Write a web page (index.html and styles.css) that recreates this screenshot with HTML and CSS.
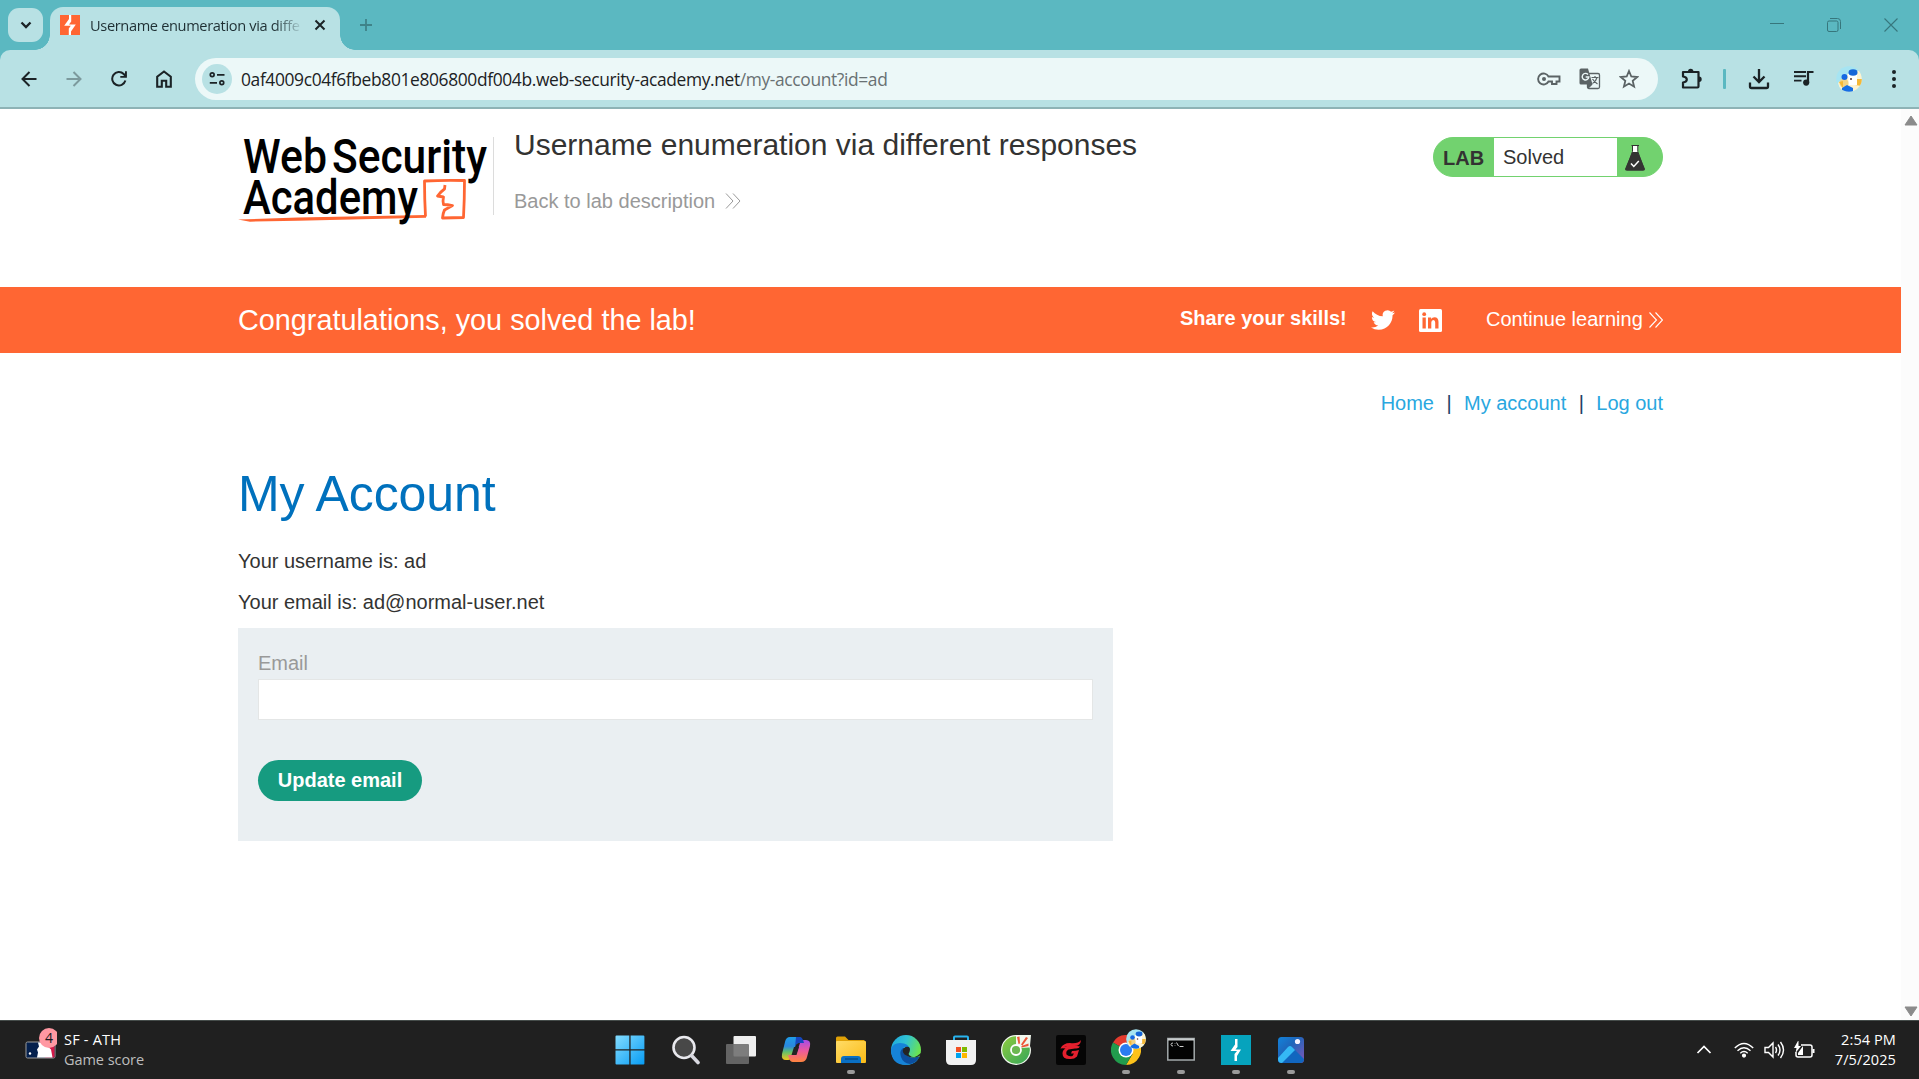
FILE: index.html
```html
<!DOCTYPE html>
<html lang="en">
<head>
<meta charset="utf-8">
<title>Username enumeration via different responses</title>
<link rel="stylesheet" href="styles.css">
</head>
<body>
<div class="tabstrip">
  <div class="tab-search"><svg width="12" height="8" viewBox="0 0 12 8"><path d="M1.500 1.500 6 6l4.500-4.500" fill="none" stroke="#1b2326" stroke-width="2.300"/></svg></div>
  <div class="tab">
    <svg class="favicon" width="20" height="20" viewBox="0 0 20 20"><path d="M0 0h20v20H0z" fill="#ff6633"/><path d="M9 0h2.200v6.500L9 9.500h6.800L11 16.500V20H8.800v-6.500l2-2.800H4.200L9 4z" fill="#fff"/></svg>
    <span class="tab-title">Username enumeration via diffe</span>
    <svg width="12" height="12" viewBox="0 0 12 12"><path d="m1.500 1.500 9 9m0-9-9 9" stroke="#1b2326" stroke-width="2"/></svg>
  </div>
  <svg class="newtab" width="14" height="14" viewBox="0 0 14 14"><path d="M7 1v12M1 7h12" stroke="#3f8389" stroke-width="1.800"/></svg>
  <div class="winctl">
    <svg width="14" height="14" viewBox="0 0 14 14"><path d="M0 5.500h14" stroke="#37767c"/></svg>
    <svg width="14" height="14" viewBox="0 0 14 14" fill="none" stroke="#37767c"><rect x=".5" y="3" width="10.500" height="10.500" rx="1.500"/><path d="M3 .5h7.500a3 3 0 0 1 3 3V11"/></svg>
    <svg width="14" height="14" viewBox="0 0 14 14"><path d="m.5.5 13 13m0-13-13 13" stroke="#37767c" stroke-width="1.100"/></svg>
  </div>
</div>

<div class="toolbar">
  <div class="cell"><svg width="16" height="16" viewBox="0 0 16 16"><path d="M15.500 8H2m6.500-7L1.500 8l7 7" fill="none" stroke="#1b2326" stroke-width="2"/></svg></div>
  <div class="cell"><svg width="16" height="16" viewBox="0 0 16 16"><path d="M.5 8H14M7.500 1l7 7-7 7" fill="none" stroke="#7c9a9d" stroke-width="2"/></svg></div>
  <div class="cell"><svg width="16" height="16" viewBox="0 0 16 16"><path d="M14.400 9.500A6.700 6.700 0 1 1 12.700 3L15 5.500" fill="none" stroke="#1b2326" stroke-width="2"/><path d="M15.900.2v6.600H9.300V5h4.700V.2z" fill="#1b2326"/></svg></div>
  <div class="cell"><svg width="16" height="18" viewBox="0 0 16 18"><path d="M1.200 16.800V6.700L8 1.500l6.800 5.200v10.100h-4.600v-6H5.800v6z" fill="none" stroke="#1b2326" stroke-width="2.100"/></svg></div>
  <div class="omnibox">
    <div class="siteinfo"><svg width="16" height="14" viewBox="0 0 16 14" fill="none" stroke="#1b2326" stroke-width="1.700"><circle cx="3.200" cy="2.800" r="1.900"/><path d="M8 2.800h7.500M.8 10.800h7.200"/><circle cx="12.800" cy="10.800" r="1.900"/></svg></div>
    <div class="url">0af4009c04f6fbeb801e806800df004b.web-security-academy.net<span>/my-account?id=ad</span></div>
    <div class="pageicons">
      <svg width="24" height="14" viewBox="0 0 24 14"><path d="M11.500 4.500a5.500 5.500 0 1 0 0 5H15v2.500h4.500V9.500H22.500v-5z" fill="none" stroke="#5b6365" stroke-width="1.900"/><circle cx="7" cy="7" r="2" fill="#5b6365"/></svg>
      <svg width="22" height="22" viewBox="0 0 22 22"><rect x="8.500" y="5.500" width="12" height="15" rx="1.500" fill="#ecf8f8" stroke="#5b6365" stroke-width="1.300"/><path d="M2 .5h7l4.500 16H2A1.500 1.500 0 0 1 .5 15V2A1.500 1.500 0 0 1 2 .5zM9 21l4.500-4.500H8z" fill="#5b6365"/><path d="M9 6.500a3.300 3.300 0 1 0 .8 2.500H6.700" fill="none" stroke="#ecf8f8" stroke-width="1.400"/><path d="M12.500 9.500h7M16 8v1.500m2 0q-1 4-4.500 6m0-4.500q2 3 5 5" fill="none" stroke="#5b6365" stroke-width="1.200"/></svg>
      <svg width="20" height="20" viewBox="0 0 20 20"><path d="m10 2 2.300 5.500 5.900.5-4.500 3.900 1.400 5.800-5.100-3.100-5.100 3.100 1.400-5.800L1.800 8l5.900-.5z" fill="none" stroke="#5b6365" stroke-width="1.800"/></svg>
    </div>
  </div>
  <div class="cell ext"><svg width="21" height="21" viewBox="0 0 21 21"><path d="M2 4h15.500v14.500q0 1-1 1H2v-5q3.800-.5 3.800-3T2 8.500z" fill="none" stroke="#1b2326" stroke-width="2.200" stroke-linejoin="round"/><path d="M7 3.500a2.700 2.700 0 0 1 5.400 0zM18 8.500a2.700 2.700 0 0 1 0 5.400z" fill="#1b2326"/></svg></div>
  <div class="sep"></div>
  <div class="cell"><svg width="22" height="22" viewBox="0 0 22 22"><path d="M11 1v12M5.500 8.500 11 14l5.500-5.500M2 14.500v4q0 1.500 1.500 1.500h15q1.500 0 1.500-1.500v-4" fill="none" stroke="#1b2326" stroke-width="2.300"/></svg></div>
  <div class="cell media"><svg width="20" height="16" viewBox="0 0 20 16"><path d="M0 2h12M0 6.300h12M0 10.600h7.500" stroke="#1b2326" stroke-width="1.900"/><path d="M14 12.500V2h5.500" fill="none" stroke="#1b2326" stroke-width="2.200"/><circle cx="12.200" cy="12.600" r="3.100" fill="#1b2326"/></svg></div>
  <div class="cell"><svg width="26" height="26" viewBox="0 0 26 26"><use href="#avatar"/></svg></div>
  <div class="cell"><svg width="4" height="20" viewBox="0 0 4 20" fill="#1b2326"><circle cx="2" cy="3" r="2"/><circle cx="2" cy="10" r="2"/><circle cx="2" cy="17" r="2"/></svg></div>
</div>

<div class="viewport">
<main class="page">
  <header class="wrap lab-header">
    <svg class="logo" width="256" height="90" viewBox="0 0 256 90">
      <text x="5" y="39" textLength="84" lengthAdjust="spacingAndGlyphs">Web</text>
      <text x="94" y="39" textLength="155" lengthAdjust="spacingAndGlyphs">Security</text>
      <path d="M187.500 82.500q-1-18-1-35.500 19-1 40-.5 0 18-1 37-11 .3-21 .5.500-5 2-8l8-4.500q-5-1-9-1-1-3 0-7.500l-6-1q4-5 7-7l.5-4" fill="none" stroke="#ff6633" stroke-width="2.800" stroke-linejoin="round"/>
      <path d="M0 85.500 60 83.500l128-2.500v2.700L60 86.700 12 87.700z" fill="#ff6633"/>
      <text x="5" y="80" textLength="175" lengthAdjust="spacingAndGlyphs">Academy</text>
    </svg>
    <div class="titles">
      <h2>Username enumeration via different responses</h2>
      <a class="back">Back to lab description <svg width="16" height="16" viewBox="0 0 16 16"><path d="m1 .5 7 7.500-7 7.500M8 .5 15 8l-7 7.500" fill="none" stroke="#999" stroke-width="1"/></svg></a>
    </div>
    <div class="status"><b>LAB</b><span>Solved</span>
      <svg width="20" height="26" viewBox="0 0 20 26"><path d="M6.500.5h7.500M7.500 1v5.500L1 24q0 1 1 1h16q1 0 1-1L12.800 6.500V1" fill="#fff" stroke="#333332" stroke-width="1"/><path d="M7.300 7h5.600L20 24q0 1.500-1.500 1.500h-17Q0 25.500 0 24z" fill="#333332"/><path d="m6 18.500 2.800 3 5-5.500" fill="none" stroke="#fff" stroke-width="1.500"/></svg>
    </div>
  </header>

  <section class="banner"><div class="wrap banner-in">
    <h4>Congratulations, you solved the lab!</h4>
    <b>Share your skills!</b>
    <svg class="tw" width="24" height="24" viewBox="0 0 24 24"><path fill="#fff" d="M23.950 4.570a10 10 0 0 1-2.820.770 4.960 4.960 0 0 0 2.160-2.720c-.950.550-2 .950-3.130 1.180a4.920 4.920 0 0 0-8.380 4.480C7.690 8.090 4.070 6.130 1.640 3.160a4.820 4.820 0 0 0-.670 2.480c0 1.710.870 3.210 2.190 4.100a4.900 4.900 0 0 1-2.230-.620v.060a4.920 4.920 0 0 0 3.950 4.830 5 5 0 0 1-2.210.080 4.940 4.940 0 0 0 4.600 3.420A9.870 9.870 0 0 1 0 19.540a13.990 13.990 0 0 0 7.550 2.210c9.050 0 14-7.500 14-13.980 0-.210 0-.420-.020-.630a9.940 9.940 0 0 0 2.460-2.550z"/></svg>
    <svg class="li" width="23" height="23" viewBox="0 0 23 23"><rect width="23" height="23" rx="1.500" fill="#fff"/><path d="M3.500 8.500h3.300V19.500H3.500zM9 8.500h3.100V10q1-1.800 3.400-1.800 4 0 4 4.800v6.500h-3.300v-6q0-2.500-1.800-2.500-2.100 0-2.100 2.500v6H9z" fill="#ff6633"/><circle cx="5.200" cy="5.200" r="1.900" fill="#ff6633"/></svg>
    <a class="continue">Continue learning</a>
    <svg width="14" height="16" viewBox="0 0 14 16"><path d="m.5.5 7 7.500-7 7.500M6.500.5l7 7.500-7 7.500" fill="none" stroke="#fff" stroke-width="1.100"/></svg>
  </div></section>

  <div class="wrap">
    <nav><a>Home</a><i>|</i><a>My account</a><i>|</i><a>Log out</a></nav>
    <h1>My Account</h1>
    <p class="user">Your username is: ad</p>
    <p class="mail">Your email is: ad@normal-user.net</p>
    <form>
      <label for="email">Email</label>
      <input id="email" type="email">
      <button type="button">Update email</button>
    </form>
  </div>
</main>
<div class="scrollbar">
  <svg width="14" height="11" viewBox="0 0 14 11"><path d="M7 1 13 10H1z" fill="#8b8b8b" stroke="#8b8b8b" stroke-linejoin="round"/></svg>
  <svg width="14" height="11" viewBox="0 0 14 11"><path d="M7 10 13 1H1z" fill="#8b8b8b" stroke="#8b8b8b" stroke-linejoin="round"/></svg>
</div>
</div>

<footer class="taskbar">
  <div class="widget">
    <svg width="32" height="32" viewBox="0 0 32 32"><rect x="1" y="14" width="29" height="16" rx="1.500" fill="#04204d" stroke="#9c9c9c"/><path d="M20 14.500h9.500v15H20z" fill="#d11947"/><path d="M13 14.500h9l1 4 3 3 1.500 8H12l1-5-1-3 2-3z" fill="#fff"/><circle cx="5" cy="25.500" r="1.200" fill="#fff"/><circle cx="24" cy="10" r="10" fill="#ff98a2"/><text x="24" y="15" text-anchor="middle" class="badge">4</text></svg>
    <div class="score"><span>SF - ATH</span><small>Game score</small></div>
  </div>
  <div class="apps">
    <div class="start"><svg width="30" height="30" viewBox="0 0 30 30"><path d="M.5 1.500q0-1 1-1h12.800v13.800H.5zM15.600.5h12.800q1 0 1 1v12.800H15.600zM.5 15.600h13.800v13.800H1.500q-1 0-1-1zM15.600 15.600h13.800v12.800q0 1-1 1H15.600z" fill="url(#gwin)"/></svg></div>
    <div><svg width="30" height="30" viewBox="0 0 30 30"><circle cx="13" cy="12.500" r="10.500" fill="#484848" stroke="#e9e9ee" stroke-width="2.600"/><path d="m20.500 20.500 6.500 7" stroke="#d8d8e0" stroke-width="3.600" stroke-linecap="round"/></svg></div>
    <div><svg width="30" height="30" viewBox="0 0 30 30"><rect x="7.500" y="1" width="22.500" height="20.500" rx="1" fill="#efefef"/><rect x="0" y="9" width="23" height="20" rx="1" fill="#6d6d6d" opacity=".88"/></svg></div>
    <div><svg width="30" height="30" viewBox="0 0 30 30"><path d="M9 2h9q2 0 3 3l1 3h-4q-3 0-4 4l-3 10q-1 3-4 3H5q-5 0-4-6L4 7q1-5 5-5z" fill="url(#gcopa)"/><path d="M20 27h-8q-3 0-4-4l-1-3h5q3 0 4-3l3-9q1-3 4-3h2q5 0 4 6l-3 11q-1 5-6 5z" fill="url(#gcopb)"/><path d="M15 2h4q2 0 3 3l1 3h-5q-3 0-4 4z" fill="#1546bf"/><path d="M13 12h5l-2.500 8h-5z" fill="#242424"/></svg></div>
    <div><svg width="30" height="30" viewBox="0 0 30 30"><path d="M0 3q0-1.500 1.500-1.500h7.500l3.500 3.500H28.500v8H0z" fill="#e0a106"/><rect y="6" width="30" height="22" rx="1" fill="url(#gfold)"/><path d="M5 28v-4q0-3 3-3h14q3 0 3 3v4z" fill="#0a70c4"/><path d="M9 24h13" stroke="#064983" stroke-width="1.300"/></svg><em></em></div>
    <div><svg width="30" height="30" viewBox="0 0 30 30"><circle cx="15" cy="15" r="15" fill="url(#gedge)"/><path d="M0 14q2-6 9-6 9 0 10 7-1-3-4-3-4 0-4 5 0 9 9 10 4 0 7-2Q22 30 15 30 0 30 0 14z" fill="#1683d8"/><path d="M12 13q-4 3-2 9 2 6 9 7 6-1 9.500-7-1-1-3 0-7 2-11-3-2-3-.5-6z" fill="#0c4f9f"/><path d="M18 20q-1-1 .5-3 2-6-4-5-5 3-1 7.500Q20 24 26 21l4-3v2l-4 2q-5 1-8-2z" fill="#242424"/></svg></div>
    <div><svg width="30" height="30" viewBox="0 0 30 30"><path d="M8 7V2.500q0-1 1-1h12q1 0 1 1V7" fill="none" stroke="#28b3ee" stroke-width="2"/><path d="M0 5h30v20q0 5-5 5H5q-5 0-5-5z" fill="#f2f2f2"/><path fill="#f25022" d="M10 12h5v5h-5z"/><path fill="#7fba00" d="M16 12h5v5h-5z"/><path fill="#00a4ef" d="M10 18h5v5h-5z"/><path fill="#ffb900" d="M16 18h5v5h-5z"/></svg></div>
    <div><svg width="30" height="30" viewBox="0 0 30 30"><path d="M15 0h15l-1 11q1 2 1 4A15 15 0 1 1 15 0z" fill="#f1f8ee"/><path d="M15 1.200a13.800 13.800 0 1 0 13.600 11.300L19 13 15 9.500z" fill="url(#gcoc)"/><circle cx="15" cy="15" r="5" fill="#6cb851" stroke="#fff" stroke-width="1.800"/><path d="m16 2 2.500-.5.500 7-1.500.5zM25 2l2 1-5.500 7.500-1.500-1zM27.500 8.500v2.500l-7 1.500v-1.500z" fill="#ee5638"/></svg></div>
    <div><svg width="30" height="30" viewBox="0 0 30 30"><rect width="30" height="30" rx="2" fill="#050505"/><path d="M4.500 13.500Q7 8 14 8q8 1 11-3-.5 6-6.500 6Q10 10 8 12q6-2.500 16-.5-1 2.500-5 2l-6.500 1q-3 1.500-2 5 2 2.500 6 1.500l1.500-2.500h-3l1-2.500q4 0 7-1l-2 6.500q-3 3-7.500 2.500-7 0-7-5.500 0-3.500 3-5-3-.5-5 0z" fill="#e5202e"/></svg></div>
    <div class="chrome"><svg width="30" height="30" viewBox="0 0 30 30"><path d="M15 15 2 7.500A15 15 0 0 1 28 7.500H15z" fill="#e33b2e"/><path d="M15 15 28 7.500A15 15 0 0 1 15 30l6.500-11z" fill="#fcc21b"/><path d="M2 7.500A15 15 0 0 0 15 30l6.500-11.200L15 15z" fill="#219c4d"/><circle cx="15" cy="15" r="7.500" fill="#fff"/><circle cx="15" cy="15" r="6" fill="#2b7cf0"/></svg><svg class="overlay" width="20" height="20" viewBox="0 0 26 26"><use href="#avatar"/></svg><em></em></div>
    <div><svg width="28" height="30" viewBox="0 0 28 30"><rect x=".8" y="3.500" width="26.400" height="21.500" fill="#030303" stroke="#a3a9ab" stroke-width="1.500"/><path d="M1 4.500h26" stroke="#c8cccd" stroke-width="2"/><path d="M6 8q-2 0-2 1.500T6 11m2-2.500v.5m0 1.500v.5m1.500-3.500 2 3.500m1 .500h4" stroke="#ccc" fill="none"/></svg><em></em></div>
    <div><svg width="30" height="30" viewBox="0 0 30 30"><path fill="#06a3bd" d="M0 0h30v30H0z"/><path d="M14 4h2.500v8l-2 2.500H20L16 21v5h-2.500v-7l2.500-3H9.500L14 9.500z" fill="#fff"/></svg><em></em></div>
    <div><svg width="28" height="28" viewBox="0 0 28 28"><rect x="1" y="1" width="26" height="26" rx="3.500" fill="url(#gpho)"/><path d="M1 22 11 11q2-2 4 0l12 12q0 4-4 4H5q-4 0-4-4z" fill="#1166bf"/><path d="M1 22 11 11q2-2 4 0l3 3L5 27q-4 0-4-4z" fill="#35b8f5"/><circle cx="20.500" cy="5.500" r="2.600" fill="#f5f3ff"/></svg><em></em></div>
  </div>
  <div class="tray">
    <svg width="16" height="10" viewBox="0 0 16 10"><path d="m1.500 8 6.500-6.500L14.500 8" fill="none" stroke="#fff" stroke-width="1.700"/></svg>
    <svg class="wifi" width="20" height="16" viewBox="0 0 20 16" fill="none" stroke="#fff" stroke-width="1.400"><path d="M.8 6q9.200-9 18.400 0M3.500 8.700q6.500-6 13 0M6.300 11.200q3.700-3.300 7.400 0"/><circle cx="10" cy="13.600" r="1.400" fill="#fff"/></svg>
    <svg class="vol" width="21" height="18" viewBox="0 0 21 18" fill="none" stroke="#fff" stroke-width="1.400"><path d="M1 6.500h3.500L9 2v14l-4.500-4.500H1zM11.500 6q2 3 0 6M14 3.500q4 5.500 0 11M16.500 1q6 8 0 16"/></svg>
    <svg class="bat" width="21" height="18" viewBox="0 0 21 18"><path d="M7 4h9q2 0 2 2v8q0 2-2 2H4q-2 0-2-2v-3" fill="none" stroke="#fff" stroke-width="1.500"/><path d="M18.500 8h2v4h-2zM4 14V12l5-7v9zM4.500-1 0 7h2.500L1.500 12 7 5H4.500z" fill="#fff"/></svg>
    <div class="clock"><span>2:54 PM</span><span>7/5/2025</span></div>
  </div>
</footer>

<svg class="defs" width="0" height="0">
  <defs>
    <linearGradient id="gwin" x2="1" y2="1"><stop stop-color="#83dcff"/><stop offset="1" stop-color="#079cf4"/></linearGradient>
    <linearGradient id="gcopa" x2="0" y2="1"><stop stop-color="#1f9de8"/><stop offset=".4" stop-color="#2a87df"/><stop offset=".65" stop-color="#62c06c"/><stop offset="1" stop-color="#f5c51c"/></linearGradient>
    <linearGradient id="gcopb" x2="0" y2="1"><stop stop-color="#a54be8"/><stop offset=".5" stop-color="#ed5a9c"/><stop offset="1" stop-color="#ff853f"/></linearGradient>
    <linearGradient id="gfold" x2="1" y2="1"><stop stop-color="#ffdc67"/><stop offset="1" stop-color="#fbbb16"/></linearGradient>
    <linearGradient id="gedge" x2="1" y2=".4"><stop stop-color="#1ba5e0"/><stop offset=".5" stop-color="#31c3d3"/><stop offset="1" stop-color="#6be34f"/></linearGradient>
    <linearGradient id="gcoc" x2="1" y2="1"><stop stop-color="#8fca3e"/><stop offset="1" stop-color="#35a75a"/></linearGradient>
    <linearGradient id="gpho" x2="1" y2="1"><stop stop-color="#1283da"/><stop offset=".4" stop-color="#1e66bb"/><stop offset="1" stop-color="#8455b5"/></linearGradient>
    <clipPath id="round"><circle cx="13" cy="13" r="12.800"/></clipPath>
    <g id="avatar" clip-path="url(#round)"><path fill="#a6e4f2" d="M0 0h26v26H0z"/><path fill="#fdf3d1" d="M13 7 26 4v22H5l-3-9z"/><circle cx="8" cy="17" r="4.500" fill="#f3d385"/><path fill="#f5b836" d="M19 13h7v7l-7-1zM3 16l4-1v7z"/><path fill="#fff" d="M12 8h9v11h-8z"/><ellipse cx="17" cy="6.500" rx="4.500" ry="3.200" fill="#1666d8"/><circle cx="8.500" cy="11" r="3" fill="#1669e3"/><path fill="#156ee6" d="m6 22 5-3 6 3v5H6z"/><circle cx="15" cy="13" r="1" fill="#533"/></g>
  </defs>
</svg>
</body>
</html>
```
FILE: styles.css
```css
* { box-sizing: border-box; }
body {
  margin: 0;
  height: 1079px;
  display: flex;
  flex-direction: column;
  overflow: hidden;
  background: #5bb8c1;
  font-family: "Liberation Sans", Arial, sans-serif;
  font-size: 20px;
  line-height: 22px;
  color: #333332;
}
svg { display: block; flex: none; }
h1, h2, h4, p { margin: 0; font-weight: 400; white-space: nowrap; }
.defs { position: absolute; }

/* browser tabs */
.tabstrip {
  height: 50px;
  flex: none;
  display: flex;
  align-items: flex-start;
}
.tab-search {
  width: 35px;
  height: 34px;
  margin: 8px 0 0 8px;
  border-radius: 11px;
  background: #b8e1e4;
  display: flex;
  align-items: center;
  justify-content: center;
}
.tab {
  position: relative;
  width: 290px;
  height: 43px;
  margin: 7px 0 0 7px;
  padding: 0 14px 7px 10px;
  border-radius: 13px 13px 0 0;
  background: #b8e1e4;
  display: flex;
  align-items: center;
}
.tab::before, .tab::after {
  content: "";
  position: absolute;
  bottom: 0;
  width: 15px;
  height: 15px;
}
.tab::before { left: -15px; background: radial-gradient(circle at 0 0, transparent 14.500px, #b8e1e4 15px); }
.tab::after { right: -15px; background: radial-gradient(circle at 100% 0, transparent 14.500px, #b8e1e4 15px); }
.tab-title {
  width: 210px;
  margin: 0 14px 0 10px;
  white-space: nowrap;
  font: 14.600px/22px "Open Sans", "Noto Sans", sans-serif;
  letter-spacing: -.35px;
  color: #1f3034;
  -webkit-mask-image: linear-gradient(90deg, #000 185px, transparent 213px);
  mask-image: linear-gradient(90deg, #000 185px, transparent 213px);
}
.newtab { margin: 18px 0 0 19px; }
.winctl { margin: 18px 21px 0 auto; display: flex; gap: 43px; }

/* address bar */
.toolbar {
  height: 59px;
  flex: none;
  display: flex;
  align-items: center;
  padding: 0 3px 0 6px;
  background: #b8e1e4;
  border-bottom: 2px solid #8eb3b6;
  border-radius: 10px 10px 0 0;
}
.cell { width: 45px; display: flex; justify-content: center; }
.omnibox {
  width: 1463px;
  height: 42px;
  margin: 1px 11px 0 9px;
  padding: 0 19px 0 7px;
  border-radius: 21px;
  background: #ecf8f8;
  display: flex;
  align-items: center;
}
.siteinfo {
  width: 30px;
  height: 30px;
  border-radius: 50%;
  background: #b8e1e4;
  display: flex;
  align-items: center;
  justify-content: center;
}
.url {
  margin: 0 auto 0 9px;
  white-space: nowrap;
  font: 17.400px/24px "Open Sans", "Noto Sans", sans-serif;
  letter-spacing: -.365px;
  color: #1c2224;
}
.url span { color: #697173; }
.pageicons { display: flex; align-items: center; gap: 18px; }
.sep { width: 3px; height: 20px; margin: 0 10px 0 9px; background: #5bb8c1; border-radius: 1px; }
.media { padding-bottom: 2px; }

/* page */
.viewport { flex: 1; display: flex; min-height: 0; }
.page { width: 1901px; background: #fff; }
.wrap { width: 1425px; margin: 0 0 0 238px; }
.lab-header { height: 178px; display: flex; align-items: flex-start; }
.logo {
  width: 256px;
  height: 90px;
  margin-top: 25px;
  overflow: visible;
  font-family: Roboto, sans-serif;
  font-size: 48px;
  font-weight: 500;
}
.titles {
  position: relative;
  margin-top: 18px;
  padding-left: 20px;
}
.titles::before {
  content: "";
  position: absolute;
  left: -1px;
  top: 10px;
  width: 1px;
  height: 78px;
  background: #dcdcdc;
}
.titles h2 { font-size: 30px; line-height: 35px; }
.back { display: flex; align-items: center; gap: 10px; margin-top: 28px; color: #999; white-space: nowrap; }
.status {
  width: 230px;
  height: 40px;
  margin: 28px 0 0 auto;
  display: flex;
  border: 1px solid #72d26f;
  border-radius: 20px;
  background: #72d26f;
  line-height: 38px;
}
.status b { width: 60px; padding-left: 9px; line-height: 41px; }
.status span { width: 123px; padding-left: 9px; background: #fff; }
.status svg { margin: 7px 0 0 8px; }
.banner { height: 66px; background: #ff6633; color: #fff; }
.banner-in { height: 66px; display: flex; align-items: center; white-space: nowrap; }
.banner h4 { font-size: 28.800px; width: 942px; }
.banner b { width: 191px; padding-bottom: 4px; }
.tw { margin-right: 24px; }
.li { margin-right: 44px; }
.continue { width: 163px; padding-bottom: 2px; }
nav { margin-top: 39px; display: flex; justify-content: flex-end; }
nav a { color: #29a7df; }
nav i { width: 30px; text-align: center; font-style: normal; color: #1d3f66; }
h1 { margin-top: 52px; font-size: 50px; line-height: 57px; letter-spacing: -.1px; color: #0071bd; }
.user { margin-top: 27px; }
.mail { margin-top: 19px; }
form {
  width: 875px;
  height: 213px;
  margin-top: 15px;
  padding: 24px 20px 40px;
  background: #eaeff2;
  display: flex;
  flex-direction: column;
}
label { color: #999; }
input {
  height: 41px;
  margin: 5px 0 40px;
  border: 1px solid #e4e6e6;
  background: #fff;
  outline: 0;
}
button {
  width: 164px;
  height: 41px;
  padding: 0;
  border: 0;
  border-radius: 21px;
  background: #169b80;
  color: #fff;
  font: bold 20px/41px "Liberation Sans", Arial, sans-serif;
}
.scrollbar {
  width: 18px;
  padding: 6px 1px 3px 3px;
  background: #fcfcfc;
  display: flex;
  flex-direction: column;
  justify-content: space-between;
}

/* taskbar */
.taskbar {
  height: 59px;
  flex: none;
  display: flex;
  background: #202020;
  border-top: 1px solid #454c4a;
  font: 14.500px/20px "Open Sans", "Noto Sans", sans-serif;
  color: #fff;
}
.widget { width: 602px; padding: 7px 0 0 25px; display: flex; gap: 7px; }
.score { display: flex; flex-direction: column; margin-top: 2px; }
.score span { letter-spacing: .2px; }
.score small { font-size: 14.500px; color: #bdbdbd; letter-spacing: -.05px; }
.badge { font-size: 14px; fill: #17171c; }
.apps { display: flex; }
.apps > div {
  position: relative;
  width: 55px;
  height: 58px;
  display: flex;
  align-items: center;
  justify-content: center;
}
.apps > .start { width: 56px; padding-right: 1px; }
.apps em {
  position: absolute;
  left: 24px;
  bottom: 5px;
  width: 8px;
  height: 4px;
  border-radius: 2px;
  background: #9a9a9a;
}
.chrome .overlay { position: absolute; left: 28px; top: 8px; }
.tray { flex: 1; display: flex; align-items: center; justify-content: flex-end; padding-right: 23px; }
.wifi { margin-left: 22px; }
.vol { margin-left: 10px; }
.bat { margin-left: 9px; }
.clock { width: 81px; display: flex; flex-direction: column; text-align: right; letter-spacing: .1px; }
```
